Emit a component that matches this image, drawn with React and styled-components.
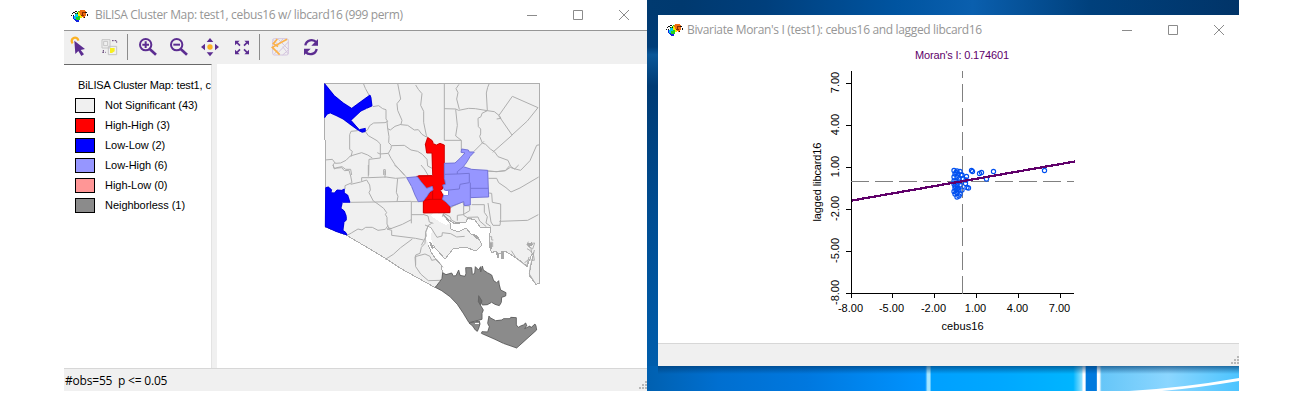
import React from 'react';
import styled, { createGlobalStyle } from 'styled-components';

const GlobalStyle = createGlobalStyle`
  body { margin: 0; background: #fff; }
  * { box-sizing: border-box; }
  svg { display: block; }
`;

const Page = styled.main`
  display: flex;
  width: 1300px;
  height: 400px;
  padding: 0 61px 9px 64px;
  overflow: hidden;
  background: #fff;
`;

const Window = styled.section`
  display: flex;
  flex-direction: column;
  flex: none;
  width: ${(p) => p.$width}px;
  height: ${(p) => p.$height}px;
  background: #fff;
  overflow: hidden;
`;

const TitleBar = styled.header`
  display: flex;
  align-items: center;
  flex: none;
  height: ${(p) => p.$height}px;
  padding-left: ${(p) => p.$inset}px;
  ${(p) => p.$ruled && 'border-bottom: 1px solid #969696;'}
`;

const Title = styled.h1`
  flex: 1;
  margin: 0 0 0 ${(p) => p.$gap}px;
  font: 400 12px/18px 'Open Sans', sans-serif;
  letter-spacing: ${(p) => p.$tracking}px;
  white-space: nowrap;
  color: #969696;
`;

const Controls = styled.div`
  display: flex;
  gap: 34px;
  padding-right: ${(p) => p.$end}px;
`;

const Toolbar = styled.nav`
  display: flex;
  flex: none;
  height: 33px;
  background: #f0f0f0;
`;

const Body = styled.div`
  display: flex;
  flex: 1;
  min-height: 0;
  background: #f0f0f0;
`;

const Legend = styled.aside`
  width: 148px;
  padding: 13px 0 0 11px;
  margin-right: 5px;
  border-top: 1px solid #696969;
  border-right: 1px solid #e3e3e3;
  background: #fff;
  font: 11px/15px 'Liberation Sans', Arial, sans-serif;
  letter-spacing: -0.04px;
  color: #000;
  white-space: nowrap;
`;

const LegendTitle = styled.div`
  padding-left: 3px;
  margin-bottom: 2px;
  letter-spacing: -0.15px;
`;

const LegendRow = styled.div`
  display: flex;
  align-items: center;
  gap: 10px;
  height: 20px;
`;

const Swatch = styled.span`
  width: 20px;
  height: 15px;
  border: 1px solid #000;
  background: ${(p) => p.$color};
`;

const StatusBar = styled.footer`
  display: flex;
  justify-content: space-between;
  flex: none;
  height: ${(p) => p.$height}px;
  padding: 3px 0 0 1px;
  border-top: 1px solid #d7d7d7;
  background: #f0f0f0;
  font: 12px/18px 'Open Sans', sans-serif;
  letter-spacing: -0.2px;
  white-space: pre;
  color: #000;
`;

const Desktop = styled.div`
  flex: none;
  width: 592px;
  height: 391px;
  padding: 15px 0 0 11px;
  overflow: hidden;
  background:
    linear-gradient(90deg, #003a70, #00396f 6%, #003f7c 20%, #0054a0 42%, #0a5fae 55%, #00407c 75%, #013468) 0 0 / 100% 15px no-repeat,
    linear-gradient(90deg, #0060b0, #006fd0 12%, #0078df 27%, #0094ff 47%, #a6e6ff 47.4% 47.8%, #00a0ff 48%, #00a8ff 60%, #00b5ff 72%, #8be0ff 73.4%, #fff 73.7% 74%, #007ade 74.2% 75.9%, #fff 76.1% 76.4%, #66c6f8 76.8%, #8bd6ff 88%, #4cc4ff) 0 366px / 100% 25px no-repeat,
    linear-gradient(180deg, #00386e, #003d78 12%, #0a5798 14%, #003b74 22%, #004d92 55%, #0060b0);
`;

const Backdrop = styled.svg`
  margin-left: -11px;
`;

const AppIcon = () => (
  <svg width="17" height="15" viewBox="0 0 17 15" shapeRendering="crispEdges">
    <path d="M4 6l4-3 3 4-3 6-3 1-2-3z" fill="#20d020" />
    <path d="M2 8h3v4h3v2H5l-3-3z" fill="#1022e0" />
    <path d="M4 6h3v3H5v2H3z" fill="#00c8e8" />
    <path d="M7 4h2v3h2v3H9V8H7z" fill="#f4ee00" />
    <path d="M9 2h5l1 2v4l-3 2-2-2-2-4z" fill="#ed6b12" />
    <path d="M11 4h3v1h-3zM10 7h3v1h-3zM11 5h1v2h-1z" fill="#8a2e00" />
    <path d="M2 4h2v1H2zM1 5h1v1H1zM4 3h2v1H4zM0 7h1v1H0zM2 7h1v1H2zM14 4h2v1h-2zM16 6h1v2h-1zM4 5h1v1H4zM13 9h1v1h-1zM6 5h1v1H6z" fill="#111" />
  </svg>
);

const WindowButtons = ({ end }) => (
  <Controls $end={end}>
    <svg width="12" height="12" fill="none" stroke="#8b8b8b"><path d="M1 6.5h10" /></svg>
    <svg width="12" height="12" fill="none" stroke="#8b8b8b"><path d="M1.5 1.5h9v9h-9z" /></svg>
    <svg width="12" height="12" fill="none" stroke="#8b8b8b"><path d="M1 1l10 10M11 1L1 11" /></svg>
  </Controls>
);

const Grip = () => (
  <svg width="9" height="22" fill="#b8b8b8" shapeRendering="crispEdges">
    <path d="M7 9h2v2H7zM4 12h2v2H4zM7 12h2v2H7zM1 15h2v2H1zM4 15h2v2H4zM7 15h2v2H7z" />
  </svg>
);

/* Toolbar glyphs share one coordinate space, in thirds of a pixel. */
const ToolIcons = () => (
  <svg width="270" height="33" viewBox="24 93 810 99">
    <g fill="none" stroke="#5c2d91">
      <circle cx="269" cy="134" r="17" strokeWidth="6" />
      <path d="M281 147l19 17" strokeWidth="8" />
      <path d="M259 134h20M269 124v20" strokeWidth="6" />
      <circle cx="362" cy="134" r="17" strokeWidth="6" />
      <path d="M374 147l19 17" strokeWidth="8" />
      <path d="M352 134h20" strokeWidth="6" />
    </g>
    <path d="M50 130a10 10 0 1 1 17-8" fill="none" stroke="#fbb123" strokeWidth="7" />
    <path d="M55 122l32 25-13 3 10 13-8 5-9-15-9 9z" fill="#5c2d91" />
    <g fill="none" stroke="#c5c5c5" strokeWidth="3">
      <path d="M138 119h24v25h-24zM157 139h25v25h-25z" />
      <path d="M143 124h12v13h-12z" />
    </g>
    <path d="M162 144h14v10l-8 5h-6z" fill="#f7ef20" />
    <path d="M168 122h14v6M139 157h10M142 150v7" fill="none" stroke="#5c3b72" strokeWidth="3" strokeDasharray="5 3" />
    <path d="M214.500 102v78M610.500 102v78" stroke="#8c8c8c" strokeWidth="3" />
    <circle cx="462" cy="141" r="8" fill="#fbb123" />
    <path d="M462 114l10 12h-20zM462 169l10-12h-20zM435 141l12-10v20zM489 141l-12-10v20z" fill="#5c2d91" />
    <path d="M537 122h14l-14 14zM579 122h-14l14 14zM537 163h14l-14-14zM579 163h-14l14-14z" fill="#5c2d91" />
    <path d="M540 125l12 12M576 125l-12 12M540 160l12-12M576 160l-12-12" stroke="#5c2d91" strokeWidth="5" />
    <g fill="none" stroke="#d4c5df" strokeWidth="3">
      <rect x="650" y="116" width="47" height="49" rx="5" />
      <path d="M667 118l30 30M682 116l-20 21M697 126l-30 31M680 140l17 22M697 150l-17 15M651 119l18 18M655 162l10-12" />
    </g>
    <path d="M693 118L649 142l22 22M664 117l-12 14 14 9" fill="none" stroke="#fbb149" strokeWidth="5" />
    <path d="M748 136c3-17 24-20 33-9M782 147c-3 17-24 20-33 9" fill="none" stroke="#5c2d91" strokeWidth="7" />
    <path d="M786 117v20h-20zM744 166v-20h20z" fill="#5c2d91" />
  </svg>
);

const ClusterMap = () => (
  <svg width="430" height="304" viewBox="217 64 430 304" shapeRendering="crispEdges" fill="none" strokeLinejoin="round">
    <path d="M217 64h430v304H217z" fill="#fff" />
    <path
      d="M324.500 83.500H539.500V283L536 284.500L529 275L531 265L534 252L531 256L527 266.500L522 262L513 256L505 251L500 254L495 251L492 253L489 246L490.500 227L480 227L475 220L468 218L466 222L455 224L449 220L443 214L446 218L450 223L451 229L458 232L466 228L471 234L478 237L482 245L476 251L465 247L453 249L445 259L437 250L430 242L431 234L426 230L428 236L428 244L431 252L435 258L441 265L443 274L442 282L435 287.500L400 268L385 258L347 235.500L325 227V140Z"
      fill="#f0f0f0" stroke="#aeaeae"
    />
    <path d="M431 216l2-3 9 1 2 4 6 5-4 2-6-3zM425 232l4-7 3 4-1 9 4 12-5-2-4-9z" fill="#fff" />
    <g stroke="#aeaeae" strokeWidth="3">
      <g transform="translate(315 75) scale(.33333)">
        <path d="M145 25l6 15 12 22M173 95l18-3 12 9 10 3v28l5 7-8 4-34 1-12 8-6 12-10 8M248 25l9 47-11 14 2 20 13 30-3 12-18 6-14 11-8-4-2-22M258 149l20 2 20 14 12-1 11 14 13 8M302 30l8 13 11 13-4 35 9 18v33l8 39 2 6" />
        <path d="M128 167l-20 2-4 10v44l8 6-4 16M150 168l10 14 26 15 10 10v42M218 160l4 25-1 18 8 8-1 10-8 14-25 2-8-4M230 212l38-1 20 14 20 4 14 9 14 15 2 20 19 10M220 235l8 15 12 19 28 31M196 249l-34 4-1 47M30 255l22-2 9 12 16-1 16-8 13-13 34-10 18 7 14 9M60 262l-6 8 4 12 7-4 16-3 11 8h15l3 17M206 300v-16h5v16" />
      </g>
      <g transform="translate(425 75) scale(.33333)">
        <path d="M58 25v171M58 196h51v30M102 28l-9 13 6 12-4 19 8 31M58 101l34 1 9 4 30-6 20 1 36 6 21 3 15 12 5 8-13 2M193 25l-5 12-4 17 3 53M222 121l40-57 77 34-32 40-46 42-40-58M187 107l-16 8-3 10-9 5 1 25 7 7v15l-3 7 8 20 10 4 14 14 13 9 10 14 30 11 8 18 10 7 20 5 28-29 20-46 10-2M203 232l60-53M177 199l-30 30M92 103l5 48-5 32 17 13M187 288l29 2 25-3 13-15" />
      </g>
      <g transform="translate(315 165) scale(.33333)">
        <path d="M54 0l4 10 22-2 8 9 14-1 5 17 4 20-21 9v10M107 58l30-7 18-6 9 15 2 15-4 8 13 25 11 7 20 15 9 13-4 5 5 9v20l5 12 10 2M140 48V38h22l51-2 29 4 30-2M160 0v35M210 18v20M106 112l75-1 108-2M289 110v65M289 149h36M289 110h35M238 0l14 12 20 22 6 6M248 40l-4 42 5 12-3 16M95 212l14-8 20-12 12 3 11-8h20l17 9 22-3 8-11M216 192l14-2 32-12 27-14M216 192l14 4v15l72 9 24 5M292 222l-35 26-22 20-24 15M318 0l10 12 12 20M302 270l13-5 4-18 11-12 2-33 8-21M324 148l15 5 4 18 12 4" />
        <path d="M302 270v30M350 175l-10 6-8 20 2 12-15 28" />
      </g>
      <g transform="translate(425 165) scale(.33333)">
        <path d="M188 18l25 2 28-3 15-10 13 5 12-12M190 40h25l6 13 22 15 15 13 27-12 56-33M190 84l10 1 2 27 25 5v47l-2 17h-21l-6-10-9-57M140 119h38v23l9 13-4 19 14 10M52 143l34-20 28-13 2 12 18 1v14l-20 12-17 2v16M116 123v28l20 12M223 169l85-3 32-17" />
        <path d="M0 180l18 8 18 29 15-4 1-10 25 3 18 10 24-2M52 155l4-10 19 10 4 10 20 11M125 165l4-8 30-1 5 12 20 17M193 215h7v10h5M195 232h8v14M310 230l-4 9 12 12 2 12M307 237l22-3-6 18-15-10M298 294l12-10 18 2-2-14-10-15-10-6" />
      </g>
      <path transform="translate(400 250) scale(.33333)" d="M45 20l2 30 15 22 23 20 35-1M45 20l30-8 15 7 5 12 15-3 19 24M334 2l15 23 31 24 7-28M403 0l-4 20-8 27-3 25 20 31" />
    </g>
    <path d="M496 252l3 2v4h-2zM501 251h3v8h-3zM429 242h2l3 6-2 1zM473 234l4 1 2 5-3-1zM527 244l5-2 1 3-4 2zM489.500 243h2v6h-2zM446 217l4 3-1 2-3-2zM455 222h5v2h-5z" fill="#a8a8a8" />
    <g strokeWidth="3">
      <path
        transform="translate(315 75) scale(.33333)"
        d="M29 26L58 62L85 84L110 100L140 78L165 60L168 68L171 93L155 100L138 108L108 136L122 152L133 164L151 160V169L142 172L130 166L108 150L84 132L64 122L46 114L37 117L29 128Z"
        fill="#00f" stroke="#0000e0"
      />
      <g transform="translate(315 165) scale(.33333)">
        <path d="M32 68L40 66L50 74L48 83L58 84L66 75L80 76L88 72V84L98 90L105 112H82L78 130L88 138L94 154V165L87 172L84 196L93 203L96 210L65 200L31 185Z" fill="#00f" stroke="#0000e0" />
      </g>
      <path transform="translate(425 165) scale(.33333)" d="M8-83L22-73L25-64L34-60L45-65L58-60V40L62 58L53 60V72L46 76L54 90L52 103L62 110L75 125V143L-5 144V110L5 95L20 77L5 70L-25 34L23 32L21-36H5L1-62Z" fill="#f00" stroke="#d00000" />
      <path transform="translate(425 165) scale(.33333)" d="M23 60V103M-5 107L15 103H52M22 32H-20" stroke="#d00000" />
      <path transform="translate(315 165) scale(.33333)" d="M275 38L307 35L318 50L335 70L352 64L354 75L345 80L335 95L325 108L310 110L300 90L290 65Z" fill="#9696ff" stroke="#7474d6" />
      <path transform="translate(425 165) scale(.33333)" d="M58-5L90-6L105-20L120-36L108-38L110-48L130-45L133-39H148L135-25L125-8L115 5L140 13L188 16L191 96L136 98V120L118 122L116 110L76 125L62 110L52 103L56 90H70V78L58 75L53 60L62 58L58 40Z" fill="#9696ff" stroke="#7474d6" />
      <path transform="translate(425 165) scale(.33333)" d="M58 28L97 27V20L115 5M97 27L133 25V53L105 58L103 72L62 76M136 53V98M137 70H190" stroke="#7474d6" />
      <path d="M443 191.500l5-1v4h-4z" fill="#fff" />
      <g transform="translate(400 250) scale(.33333)" fill="#8b8b8b" stroke="#666">
        <path d="M106 112L119 95L126 85L128 68L138 74L155 69L160 78L168 77L176 60L180 76L195 79L198 70L197 53H215L217 74L224 70L226 50L236 60L242 50V66L247 48L250 60L262 68L275 75L281 92L290 98L296 92L298 105L302 120L318 128L317 138L305 142L304 157L298 167L285 163L275 157L262 164L247 165L243 155L241 165L250 180L246 190V208L207 218L190 190L172 163L150 140L125 122Z" />
        <path d="M207 219L238 213L240 222L236 235L232 244L226 240L218 228Z" />
        <path d="M224 218h12v4h-12z" fill="#fff" stroke="none" />
        <path d="M267 198L270 203L287 212L306 210L310 206H330L332 202L349 203V225L355 232L362 228L370 225L377 219L380 227L374 236L390 228L393 233L405 222L408 228L410 240L350 294L310 280L285 268L244 250L246 245L263 246L268 230L263 220Z" />
        <path d="M236 137L246 153L241 165L235 155Z" fill="#6e6e6e" />
      </g>
    </g>
  </svg>
);

const categories = [
  ['Not Significant (43)', '#f0f0f0'],
  ['High-High (3)', '#ff0000'],
  ['Low-Low (2)', '#0000ff'],
  ['Low-High (6)', '#9696ff'],
  ['High-Low (0)', '#ff9696'],
  ['Neighborless (1)', '#8b8b8b'],
];

const ticks = ['-8.00', '-5.00', '-2.00', '1.00', '4.00', '7.00'];

const points = [
  [954, 170.5], [957, 171], [960, 171.5], [955, 174], [958, 174], [961, 175], [954, 177], [957, 177], [959, 179],
  [956, 181], [959, 182], [954, 184], [957, 185], [960, 185], [955, 188], [958, 188], [956, 190], [959, 190], [954, 191.5],
  [957, 193], [955, 194], [960, 194], [957, 197], [959, 196], [962, 175], [963, 179], [962, 190], [966.5, 176.5], [966, 180], [965.5, 183.5],
  [967, 187.5], [968.5, 188], [971.5, 170.5], [972.5, 171.5], [979.5, 173.5], [981.5, 172.5], [986.5, 179], [993.5, 171.5], [1044.5, 170.5],
  [956, 172.5], [955, 186], [957, 189], [954, 181],
];

const PlotText = styled.text`
  font: 11px 'Liberation Sans', Arial, sans-serif;
  text-anchor: middle;
`;

const ScatterPlot = () => (
  <svg width="581" height="299" viewBox="658 44 581 299">
    <PlotText x="962" y="59" fill="#60006a" textLength="94">Moran's I: 0.174601</PlotText>
    <g shapeRendering="crispEdges" fill="none">
      <path d="M851.500 71V293.500H1074" stroke="#000" />
      {ticks.map((t, i) => (
        <path key={t} d={`M846 ${293.5 - i * 42}h5M${[851.5, 892.5, 934.5, 976.5, 1018.5, 1060.5][i]} 293v5`} stroke="#000" />
      ))}
      <path d="M962.500 294V71M851 181.500H1074" stroke="#808080" strokeDasharray="18 6" />
    </g>
    <g fill="none" stroke="#0050f0" strokeWidth="1.15">
      {points.map(([x, y]) => <circle key={`${x}/${y}`} cx={x} cy={y} r="2.1" />)}
    </g>
    <path d="M852 200.500L1075 161.500" stroke="#60006a" strokeWidth="2.300" shapeRendering="crispEdges" />
    {ticks.map((t, i) => (
      <React.Fragment key={t}>
        <PlotText x={[850.5, 891.5, 933.5, 975.5, 1017.5, 1059.5][i]} y="312">{t}</PlotText>
        <PlotText transform={`translate(839 ${292.5 - i * 42}) rotate(-90)`}>{t}</PlotText>
      </React.Fragment>
    ))}
    <PlotText x="962.500" y="330" textLength="42">cebus16</PlotText>
    <PlotText transform="translate(821 182) rotate(-90)" textLength="79">lagged libcard16</PlotText>
  </svg>
);

export default function App() {
  return (
    <>
      <GlobalStyle />
      <Page>
        <Window $width={583} $height={391}>
          <TitleBar $height={31} $inset={7} $ruled>
            <AppIcon />
            <Title $gap={7} $tracking={-0.35}>BiLISA Cluster Map: test1, cebus16 w/ libcard16 (999 perm)</Title>
            <WindowButtons end={17} />
          </TitleBar>
          <Toolbar><ToolIcons /></Toolbar>
          <Body>
            <Legend>
              <LegendTitle>BiLISA Cluster Map: test1, c</LegendTitle>
              {categories.map(([label, color]) => (
                <LegendRow key={label}><Swatch $color={color} />{label}</LegendRow>
              ))}
            </Legend>
            <ClusterMap />
          </Body>
          <StatusBar $height={23}>#obs=55  p &lt;= 0.05<Grip /></StatusBar>
        </Window>
        <Desktop>
          <Window $width={581} $height={351}>
            <TitleBar $height={29} $inset={8}>
              <AppIcon />
              <Title $gap={4} $tracking={-0.34}>Bivariate Moran's I (test1): cebus16 and lagged libcard16</Title>
              <WindowButtons end={14} />
            </TitleBar>
            <ScatterPlot />
            <StatusBar $height={23}><span /><Grip /></StatusBar>
          </Window>
          <Backdrop width="592" height="25" viewBox="0 0 592 25">
            <defs>
              <linearGradient id="shade" x2="0" y2="1">
                <stop stopColor="#003a70" stopOpacity=".65" />
                <stop offset="1" stopColor="#003a70" stopOpacity="0" />
              </linearGradient>
            </defs>
            <path d="M11 0H592V8H11z" fill="url(#shade)" />
            <path d="M482 25Q535 22 592 12v3Q550 22 515 25z" fill="#fff" />
          </Backdrop>
        </Desktop>
      </Page>
    </>
  );
}
